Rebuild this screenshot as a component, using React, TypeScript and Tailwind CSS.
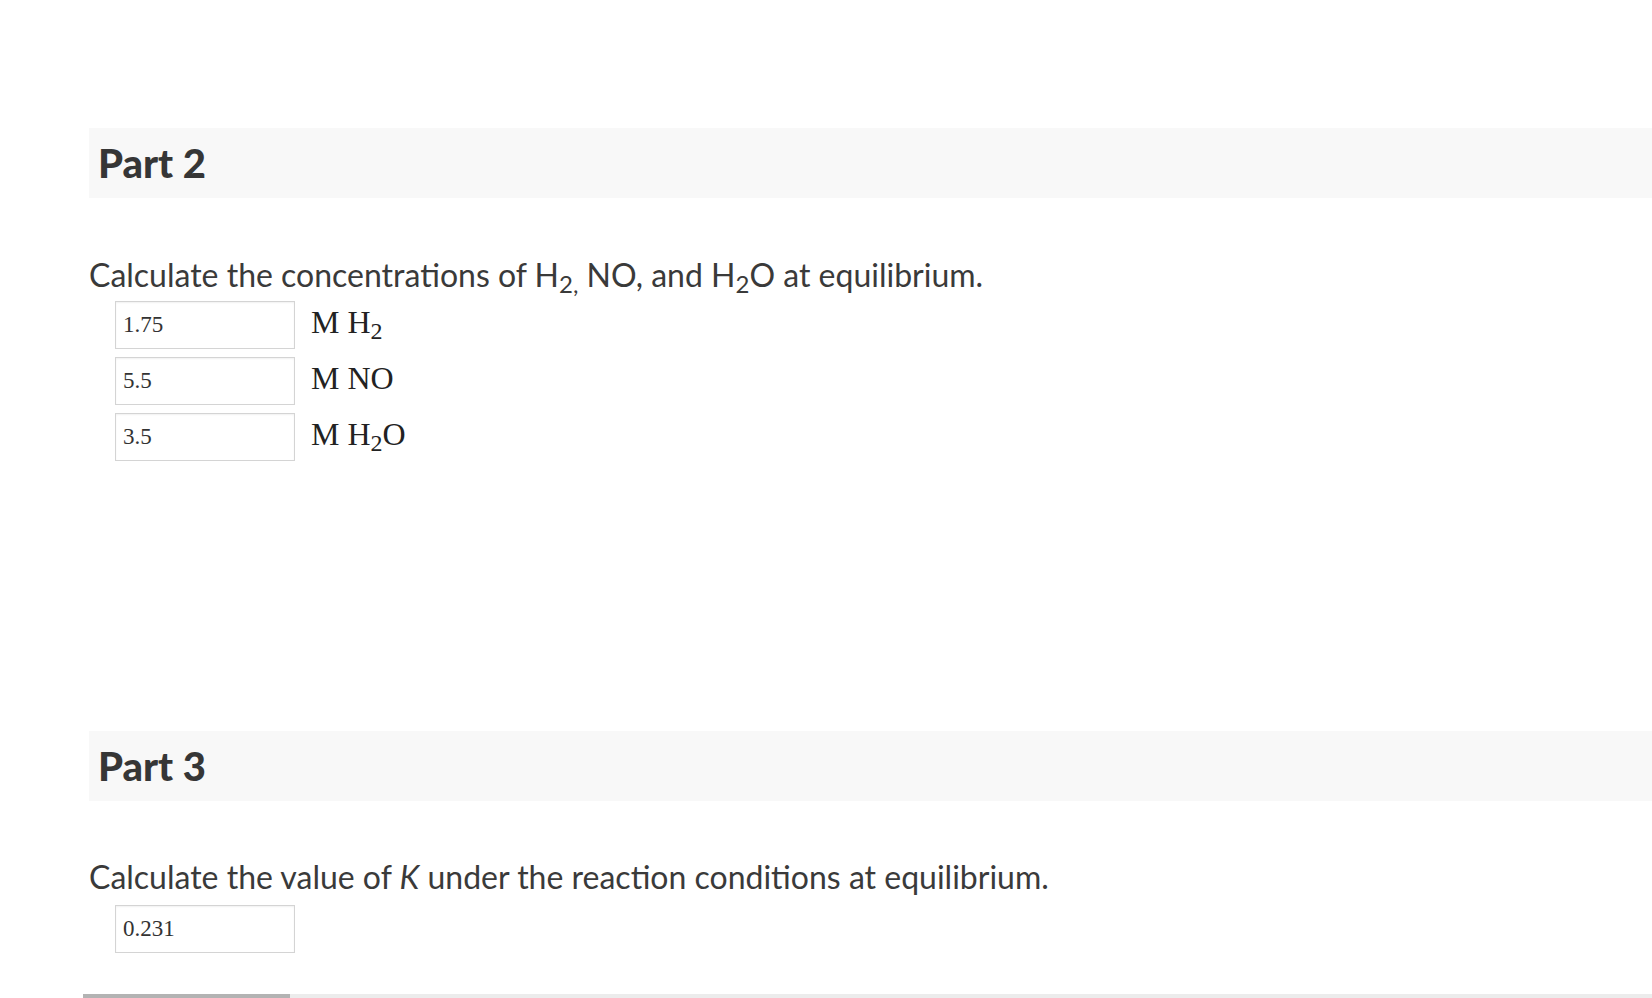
import React from 'react';

const lato = { fontFamily: 'Lato, "Open Sans", sans-serif' };
const times = { fontFamily: '"Liberation Serif", "Times New Roman", serif' };

function PartHeader({ title }: { title: string }) {
    return (
        <div className="h-[70px] bg-[#f8f8f8] flex items-center pl-[9px]">
            <h2 className="text-[40px] font-black text-[#363636] leading-none" style={lato}>
                {title}
            </h2>
        </div>
    );
}

function AnswerBox({ value }: { value: string }) {
    return (
        <div
            className="w-[180px] h-[48px] border border-[#d4d4d4] bg-white flex items-center pl-[7px] shadow-[inset_0_1px_2px_rgba(0,0,0,0.06)] text-[23px] text-[#333]"
            style={times}
        >
            {value}
        </div>
    );
}

export default function App() {
    const rows = [
        { value: '1.75', unit: <>M H<sub>2</sub></> },
        { value: '5.5', unit: <>M NO</> },
        { value: '3.5', unit: <>M H<sub>2</sub>O</> },
    ];

    return (
        <div className="w-[1652px] h-[998px] bg-white overflow-hidden">
            <div className="pt-[128px] pl-[89px]">
                <PartHeader title="Part 2" />

                <p className="mt-[57px] text-[32px] leading-[40px] text-[#3a3a3a]" style={lato}>
                    Calculate the concentrations of H<sub>2,</sub> NO, and H<sub>2</sub>O at equilibrium.
                </p>

                <div className="mt-[6px] ml-[26px] flex flex-col gap-[8px]">
                    {rows.map((row) => (
                        <div key={row.value} className="flex items-center">
                            <AnswerBox value={row.value} />
                            <span className="ml-[16px] text-[32px] text-[#222] leading-none -mt-[6px]" style={times}>
                                {row.unit}
                            </span>
                        </div>
                    ))}
                </div>

                <div className="mt-[270px]">
                    <PartHeader title="Part 3" />
                </div>

                <p className="mt-[56px] text-[32px] leading-[40px] text-[#3a3a3a]" style={lato}>
                    Calculate the value of <i>K</i> under the reaction conditions at equilibrium.
                </p>

                <div className="mt-[8px] ml-[26px]">
                    <AnswerBox value="0.231" />
                </div>

                <div className="mt-[41px] -ml-[6px] h-[4px] bg-[#ececec] flex">
                    <div className="w-[207px] bg-[#b3b3b3]" />
                </div>
            </div>
        </div>
    );
}
